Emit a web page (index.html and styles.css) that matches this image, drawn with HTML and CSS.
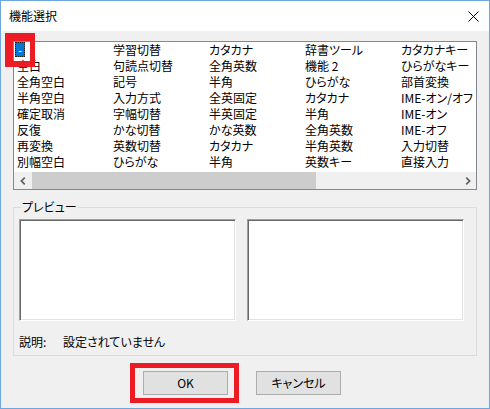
FILE: index.html
```html
<!DOCTYPE html>
<html lang="ja">
<head>
<meta charset="utf-8">
<title>機能選択</title>
<link rel="stylesheet" href="styles.css">
</head>
<body>
<div class="window">
  <div class="titlebar">
    <span class="title">機能選択</span>
    <svg class="close" width="11" height="11" viewBox="0 0 11 11"><path d="M0.5 0.5L10.5 10.5M10.5 0.5L0.5 10.5" stroke="#000" stroke-width="1" fill="none"/></svg>
  </div>
  <div class="content">
    <div class="listbox">
      <div class="list">
        <div class="item sel"><span>-</span></div>
        <div class="item"><span>空白</span></div>
        <div class="item"><span>全角空白</span></div>
        <div class="item"><span>半角空白</span></div>
        <div class="item"><span>確定取消</span></div>
        <div class="item"><span>反復</span></div>
        <div class="item"><span>再変換</span></div>
        <div class="item"><span>別幅空白</span></div>

        <div class="item"><span>学習切替</span></div>
        <div class="item"><span>句読点切替</span></div>
        <div class="item"><span>記号</span></div>
        <div class="item"><span>入力方式</span></div>
        <div class="item"><span>字幅切替</span></div>
        <div class="item"><span>かな切替</span></div>
        <div class="item"><span>英数切替</span></div>
        <div class="item"><span>ひらがな</span></div>

        <div class="item"><span>カタカナ</span></div>
        <div class="item"><span>全角英数</span></div>
        <div class="item"><span>半角</span></div>
        <div class="item"><span>全英固定</span></div>
        <div class="item"><span>半英固定</span></div>
        <div class="item"><span>かな英数</span></div>
        <div class="item"><span>カタカナ</span></div>
        <div class="item"><span>半角</span></div>

        <div class="item"><span>辞書ツール</span></div>
        <div class="item"><span>機能 2</span></div>
        <div class="item"><span>ひらがな</span></div>
        <div class="item"><span>カタカナ</span></div>
        <div class="item"><span>半角</span></div>
        <div class="item"><span>全角英数</span></div>
        <div class="item"><span>半角英数</span></div>
        <div class="item"><span>英数キー</span></div>

        <div class="item"><span>カタカナキー</span></div>
        <div class="item"><span>ひらがなキー</span></div>
        <div class="item"><span>部首変換</span></div>
        <div class="item"><span>IME-オン/オフ</span></div>
        <div class="item"><span>IME-オン</span></div>
        <div class="item"><span>IME-オフ</span></div>
        <div class="item"><span>入力切替</span></div>
        <div class="item"><span>直接入力</span></div>
      </div>
      <div class="hscroll">
        <div class="arrow"><svg width="6" height="8" viewBox="0 0 6 8"><path d="M4.8 0.6L1.4 4L4.8 7.4" stroke="#606060" stroke-width="1.7" fill="none"/></svg></div>
        <div class="thumb"></div>
        <div class="track"></div>
        <div class="arrow"><svg width="6" height="8" viewBox="0 0 6 8"><path d="M1.2 0.6L4.6 4L1.2 7.4" stroke="#606060" stroke-width="1.7" fill="none"/></svg></div>
      </div>
      <div class="mark mark-sel"></div>
    </div>

    <div class="group">
      <span class="group-label">プレビュー</span>
      <div class="previews">
        <div class="pv"></div>
        <div class="pv"></div>
      </div>
      <div class="desc">
        <span class="desc-label">説明:</span>
        <span>設定されていません</span>
      </div>
    </div>

    <div class="buttons">
      <div class="btn">OK<div class="mark mark-ok"></div></div>
      <div class="btn">キャンセル</div>
    </div>
  </div>
</div>
</body>
</html>
```

FILE: styles.css
```css
html, body {
  margin: 0;
  padding: 0;
  background: #f0f0f0;
}

.window {
  width: 490px;
  height: 409px;
  box-sizing: border-box;
  border: 1px solid #6ea6de;
  background: #f0f0f0;
  font-family: "Noto Sans CJK JP", "Noto Sans", sans-serif;
  font-size: 12px;
  font-feature-settings: "palt";
  color: #000;
  overflow: hidden;
}

.titlebar {
  height: 30px;
  background: #fff;
  display: flex;
  align-items: center;
  justify-content: space-between;
  padding: 0 10px 0 8px;
}

.title {
  line-height: 16px;
  font-feature-settings: normal;
}

.close {
  display: block;
}

.content {
  padding: 10px 12px 0 12px;
}

.listbox {
  position: relative;
  width: 464px;
  height: 149px;
  box-sizing: border-box;
  border: 1px solid #828790;
  background: #fff;
  display: flex;
  flex-direction: column;
}

.list {
  flex: 1;
  display: grid;
  grid-template-rows: repeat(8, 16px);
  grid-auto-flow: column;
  grid-auto-columns: 96px;
  align-content: start;
  overflow: hidden;
}

.item {
  line-height: 16px;
  white-space: nowrap;
  padding-left: 1px;
}

.item span {
  display: inline-block;
  padding: 0 2px;
  height: 16px;
}

.item.sel span {
  box-sizing: border-box;
  background: #0078d7;
  color: #fff;
  width: 10px;
  height: 15px;
  line-height: 13px;
  border: 1px dotted #202020;
  padding: 0;
  text-align: center;
}

.hscroll {
  height: 17px;
  display: flex;
  background: #f0f0f0;
}

.arrow {
  width: 17px;
  flex: none;
  display: flex;
  align-items: center;
  justify-content: center;
}

.arrow svg {
  display: block;
}

.thumb {
  width: 284px;
  margin-left: 1px;
  background: #cdcdcd;
}

.track {
  flex: 1;
}

.mark {
  position: absolute;
  box-sizing: border-box;
  border: 5px solid #ed1c24;
  pointer-events: none;
}

.mark-sel {
  left: -9px;
  top: -9px;
  width: 30px;
  height: 34px;
  border-width: 8px 5px 6px 8px;
}

.group {
  position: relative;
  margin-top: 17px;
  width: 464px;
  height: 149px;
  box-sizing: border-box;
  border: 1px solid #dcdcdc;
  padding: 11px 0 0 5px;
}

.group-label {
  position: absolute;
  top: -9px;
  left: 7px;
  padding: 0 1px;
  background: #f0f0f0;
  line-height: 16px;
}

.previews {
  display: flex;
  gap: 11px;
}

.pv {
  width: 217px;
  height: 102px;
  box-sizing: border-box;
  background: #fff;
  border: 1px solid;
  border-color: #a0a0a0 #ffffff #ffffff #a0a0a0;
  box-shadow: inset 1px 1px 0 #696969, inset -1px -1px 0 #e3e3e3;
}

.desc {
  margin-top: 13px;
  display: flex;
  line-height: 16px;
}

.desc-label {
  width: 44px;
}

.buttons {
  display: flex;
  gap: 28px;
  padding-left: 130px;
  margin-top: 15px;
}

.btn {
  position: relative;
  width: 85px;
  height: 24px;
  box-sizing: border-box;
  border: 1px solid #adadad;
  background: #e1e1e1;
  display: flex;
  align-items: center;
  justify-content: center;
  line-height: 16px;
}

.mark-ok {
  left: -14px;
  top: -9px;
  width: 109px;
  height: 40px;
}
```
